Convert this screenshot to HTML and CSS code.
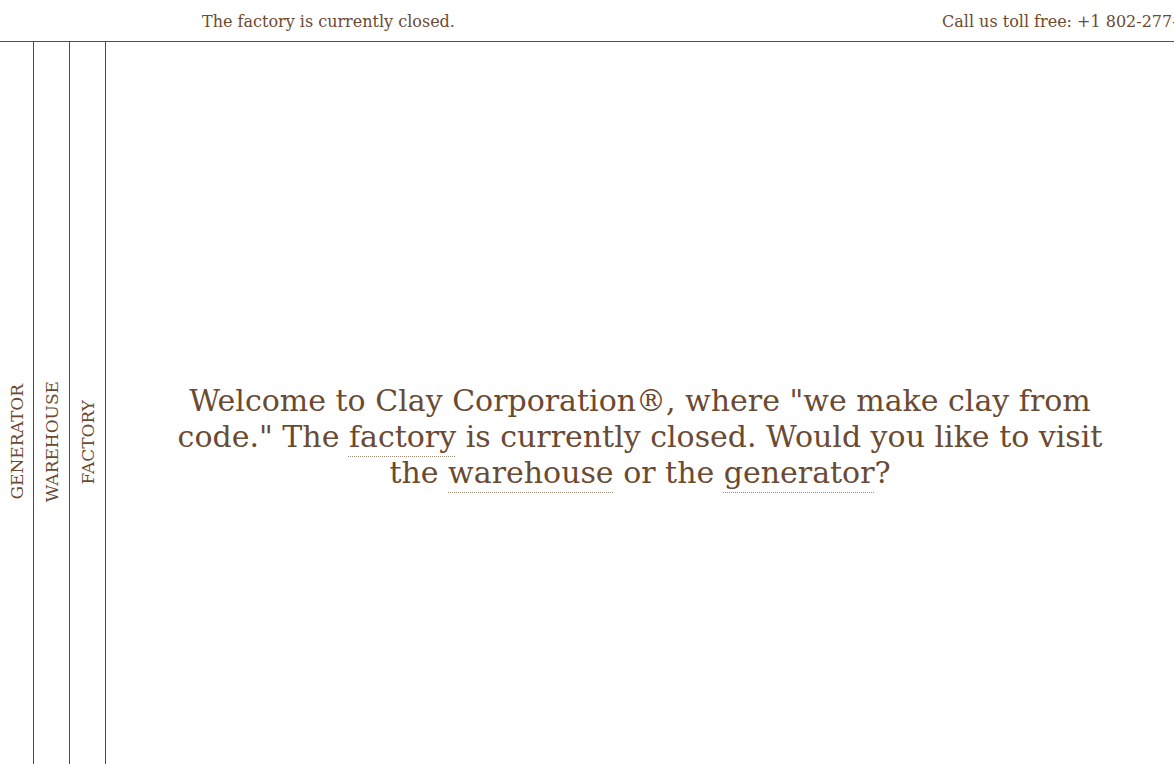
FILE: index.html
```html
<!DOCTYPE html>
<html lang="en">
<head>
<meta charset="utf-8">
<title>Clay Corporation</title>
<link rel="stylesheet" href="styles.css">
</head>
<body>
<header class="topbar">
  <span class="status">The factory is currently closed.</span>
  <span class="phone">Call us toll free: +1 802-277-2529</span>
</header>
<div class="layout">
  <nav class="rail">
    <a class="rail-item" href="#generator"><span class="rail-label">GENERATOR</span></a>
    <a class="rail-item" href="#warehouse"><span class="rail-label">WAREHOUSE</span></a>
    <a class="rail-item" href="#factory"><span class="rail-label">FACTORY</span></a>
  </nav>
  <main class="stage">
    <p class="welcome">Welcome to Clay Corporation®, where "we make clay from code." The <a class="link" href="#factory">factory</a> is currently closed. Would you like to visit the <a class="link" href="#warehouse">warehouse</a> or the <a class="link" href="#generator">generator</a>?</p>
  </main>
</div>
</body>
</html>
```
FILE: styles.css
```css
html, body {
  margin: 0;
  padding: 0;
  height: 100%;
}
body {
  background: #ffffff;
  color: #6b4a32;
  font-family: "DejaVu Serif", serif;
  overflow: hidden;
  display: flex;
  flex-direction: column;
}
.topbar {
  height: 40px;
  padding-top: 1px;
  border-bottom: 1px solid #5e4a3a;
  display: grid;
  grid-template-columns: 740px auto;
  padding-left: 202px;
  align-items: center;
  white-space: nowrap;
  font-size: 16px;
  overflow: hidden;
}
.layout {
  flex: 1;
  display: flex;
  min-height: 0;
}
.rail {
  display: flex;
}
.rail-item {
  width: 35px;
  border-right: 1px solid #5e4a3a;
  display: flex;
  align-items: center;
  justify-content: center;
  padding-top: 78px;
  color: inherit;
  text-decoration: none;
}
.rail-item:first-child {
  width: 33px;
}
.rail-label {
  writing-mode: vertical-rl;
  transform: rotate(180deg);
  font-size: 17px;
}
.stage {
  flex: 1;
  display: flex;
  align-items: center;
  justify-content: center;
  padding-top: 68px;
}
.welcome {
  margin: 0;
  max-width: 960px;
  text-align: center;
  font-size: 30px;
  line-height: 36px;
}
.link {
  color: inherit;
  text-decoration: underline dotted #a08a78;
  text-decoration-thickness: 1px;
  text-underline-offset: 9px;
}
```
